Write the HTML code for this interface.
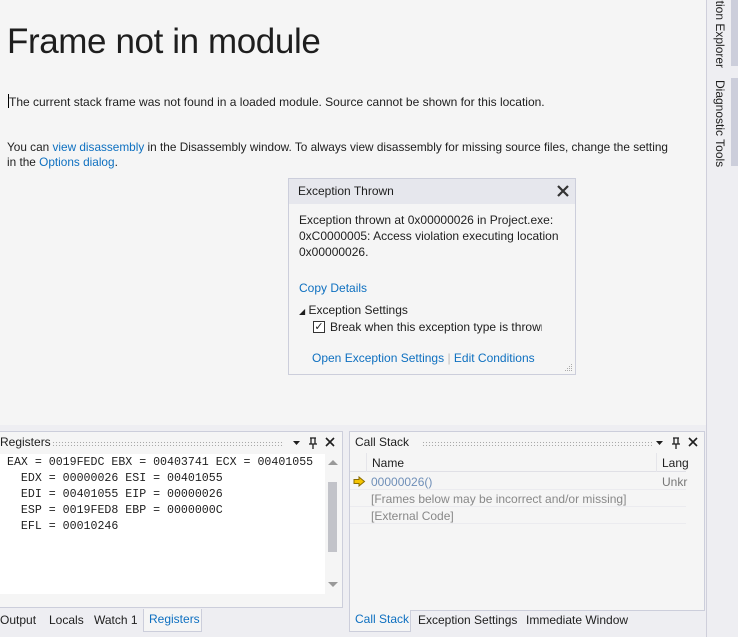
<!DOCTYPE html>
<html><head><meta charset="utf-8"><style>
*{margin:0;padding:0;box-sizing:border-box}
body{width:738px;height:637px;overflow:hidden;background:#eeeef2;font-family:"Liberation Sans",sans-serif;font-size:12px;color:#1e1e1e;position:relative}
.abs{position:absolute}
a{color:#0e70c0;text-decoration:none}
.main{left:0;top:0;width:706px;height:425px;background:#f5f5f5}
h1{position:absolute;left:7px;top:22px;font-size:35px;font-weight:normal;color:#1e1e1e;letter-spacing:-0.4px}
.p{font-size:11.8px;white-space:nowrap}
.side{left:706px;top:0;width:32px;height:637px;background:#eeeef2;border-left:1px solid #cfcfdb}
.vt{position:absolute;transform:rotate(90deg);transform-origin:0 0;white-space:nowrap;font-size:12px;color:#1e1e1e}
.bar{position:absolute;left:731px;width:7px;background:#cccedb}
.exc{left:288px;top:178px;width:288px;height:197px;background:#f5f5f5;border:1px solid #cccedb}
.exh{height:25px;background:#e6e7ed;padding:5px 9px;font-size:12px}
.panel{background:#f5f5f5;border:1px solid #cccedb}
.hdr{height:20px;font-size:12px;padding:3px 0;white-space:nowrap}
.dots{position:absolute;top:9px;height:5px;background-image:radial-gradient(#aaa 0.6px,transparent 0.8px);background-size:3px 3px}
.mono{font-family:"Liberation Mono","DejaVu Sans Mono",monospace;font-size:11.6px;line-height:16px;white-space:pre}
.tab{position:absolute;top:610px;font-size:12px;white-space:nowrap}
</style></head><body>
<div class="abs main">
<h1>Frame not in module</h1>
<div class="abs" style="left:8px;top:94px;width:1px;height:14px;background:#000"></div>
<div class="abs p" style="left:9px;top:95px;font-size:12px">The current stack frame was not found in a loaded module. Source cannot be shown for this location.</div>
<div class="abs p" style="left:7px;top:140px">You can <a>view disassembly</a> in the Disassembly window. To always view disassembly for missing source files, change the setting</div>
<div class="abs p" style="left:7px;top:155px">in the <a>Options dialog</a>.</div>
</div>
<div class="abs side"></div>
<div class="bar" style="top:0;height:66px"></div>
<div class="bar" style="top:78px;height:88px"></div>
<div class="vt" style="left:727px;top:-6px">ution Explorer</div>
<div class="vt" style="left:727px;top:80px">Diagnostic Tools</div>

<div class="abs exc">
<div class="exh">Exception Thrown<svg style="position:absolute;right:6px;top:6px" width="12" height="12"><path d="M1 1L11 11M11 1L1 11" stroke="#333" stroke-width="2.2"/></svg></div>
<div class="abs" style="left:10px;top:33px;line-height:16px;white-space:nowrap">Exception thrown at 0x00000026 in Project.exe:<br>0xC0000005: Access violation executing location<br>0x00000026.</div>
<div class="abs" style="left:10px;top:102px"><a>Copy Details</a></div>
<div class="abs" style="left:10px;top:124px;white-space:nowrap"><span style="font-size:8px">◢</span> Exception Settings</div>
<div class="abs" style="left:24px;top:142px;width:12px;height:12px;border:1px solid #333;background:#fff;font-size:11px;line-height:10px;text-align:center">✓</div>
<div class="abs" style="left:41px;top:141px;white-space:nowrap;width:212px;overflow:hidden">Break when this exception type is thrown</div>
<div class="abs" style="left:23px;top:172px;white-space:nowrap"><a>Open Exception Settings</a> <span style="color:#bbb">|</span> <a>Edit Conditions</a></div>
<svg class="abs" style="right:2px;bottom:2px" width="10" height="10"><g fill="#aaa"><rect x="8" y="2" width="1" height="1"/><rect x="6" y="4" width="1" height="1"/><rect x="8" y="4" width="1" height="1"/><rect x="4" y="6" width="1" height="1"/><rect x="6" y="6" width="1" height="1"/><rect x="8" y="6" width="1" height="1"/><rect x="2" y="8" width="1" height="1"/><rect x="4" y="8" width="1" height="1"/><rect x="6" y="8" width="1" height="1"/><rect x="8" y="8" width="1" height="1"/></g></svg>
</div>

<div class="abs panel" style="left:-1px;top:431px;width:344px;height:177px;border-left:none">
<div class="hdr" style="padding-left:1px">Registers</div>
<div class="dots" style="left:53px;width:232px"></div>
<svg class="abs" style="left:292px;top:4px" width="50" height="14"><path d="M2 5h7l-3.5 4z" fill="#1e1e1e"/><path d="M19 2h6M20 2v6M24 2v6M18 8h8M22 8v5" stroke="#1e1e1e" stroke-width="1.3" fill="none"/><path d="M35 2l8 8M43 2l-8 8" stroke="#1e1e1e" stroke-width="1.6"/></svg>
<div class="abs mono" style="left:1px;top:22px;width:325px;height:140px;background:#fff;padding:1px 0 0 7px;overflow:hidden">EAX = 0019FEDC EBX = 00403741 ECX = 00401055
  EDX = 00000026 ESI = 00401055
  EDI = 00401055 EIP = 00000026
  ESP = 0019FED8 EBP = 0000000C
  EFL = 00010246</div>
<div class="abs" style="left:326px;top:22px;width:16px;height:140px;background:#f5f5f5"><div style="position:absolute;left:3px;top:28px;width:9px;height:70px;background:#c2c3c9"></div><svg style="position:absolute;left:3px;top:6px" width="10" height="6"><path d="M0 5L5 0L10 5z" fill="#999"/></svg><svg style="position:absolute;left:3px;bottom:6px" width="10" height="6"><path d="M0 0L5 5L10 0z" fill="#999"/></svg></div>
</div>
<div class="abs" style="left:143px;top:609px;width:59px;height:23px;background:#f5f5f5;border:1px solid #cccedb;border-top:none"></div>
<div class="tab" style="left:0;top:613px">Output</div>
<div class="tab" style="left:49px;top:613px">Locals</div>
<div class="tab" style="left:94px;top:613px">Watch 1</div>
<div class="tab" style="left:149px;top:612px;color:#0e70c0">Registers</div>

<div class="abs panel" style="left:349px;top:431px;width:356px;height:180px">
<div class="hdr" style="padding-left:5px">Call Stack</div>
<div class="dots" style="left:72px;width:230px"></div>
<svg class="abs" style="left:304px;top:4px" width="50" height="14"><path d="M2 5h7l-3.5 4z" fill="#1e1e1e"/><path d="M19 2h6M20 2v6M24 2v6M18 8h8M22 8v5" stroke="#1e1e1e" stroke-width="1.3" fill="none"/><path d="M35 2l8 8M43 2l-8 8" stroke="#1e1e1e" stroke-width="1.6"/></svg>
<div class="abs" style="left:0;top:21px;width:336px;height:19px;border-bottom:1px solid #e0e0e6">
<div class="abs" style="left:16px;top:0;width:1px;height:19px;background:#e5e5ea"></div>
<div class="abs" style="left:22px;top:3px">Name</div>
<div class="abs" style="left:306px;top:0;width:1px;height:19px;background:#e5e5ea"></div>
<div class="abs" style="left:312px;top:3px">Lang</div></div>
<svg class="abs" style="left:3px;top:44px" width="13" height="11"><path d="M1 3.5h5V1l5.5 4.5L6 10V7.5H1z" fill="#f5c400" stroke="#8a6d00" stroke-width="1"/></svg>
<div class="abs" style="left:21px;top:43px;color:#6f8fb8">00000026()</div>
<div class="abs" style="left:312px;top:43px;color:#777">Unkr</div>
<div class="abs" style="left:21px;top:60px;color:#888">[Frames below may be incorrect and/or missing]</div>
<div class="abs" style="left:21px;top:77px;color:#888">[External Code]</div>
<div class="abs" style="left:0;top:57px;width:336px;height:1px;background:#ebebef"></div>
<div class="abs" style="left:0;top:74px;width:336px;height:1px;background:#ebebef"></div>
<div class="abs" style="left:0;top:91px;width:336px;height:1px;background:#ebebef"></div>
</div>
<div class="abs" style="left:349px;top:610px;width:62px;height:22px;background:#f5f5f5;border:1px solid #cccedb;border-top:none"></div>
<div class="tab" style="left:355px;top:612px;color:#0e70c0">Call Stack</div>
<div class="tab" style="left:418px;top:613px">Exception Settings</div>
<div class="tab" style="left:526px;top:613px">Immediate Window</div>
</body></html>
